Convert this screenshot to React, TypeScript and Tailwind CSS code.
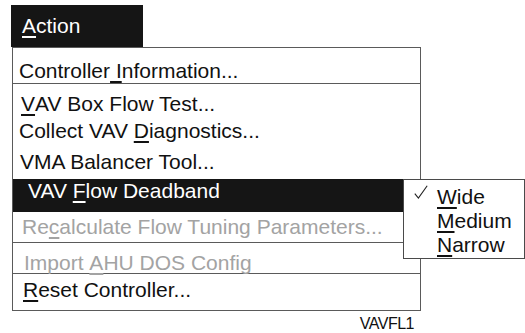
import type { ReactNode } from 'react';

function CheckMark() {
  return (
    <svg viewBox="0 0 14 14" aria-hidden="true" className="block h-[14px] w-[14px]">
      <path d="M0.8 8.6 L4.4 13 L13.2 0.8" fill="none" stroke="#222" strokeWidth="1.1" />
    </svg>
  );
}

function Key({ children }: { children: ReactNode }) {
  return <span className="underline decoration-[1.5px] underline-offset-[3px]">{children}</span>;
}

function Row({
  className,
  children,
}: {
  className: string;
  children: ReactNode;
}) {
  return <div className={`flex items-start whitespace-nowrap leading-none ${className}`}>{children}</div>;
}

export default function App() {
  return (
    <div className="h-[333px] w-[525px] overflow-hidden bg-white pt-[5px] text-[21px] text-[#111] [font-family:'Liberation_Sans',Arial,sans-serif]">
      <div className="ml-[11px] h-[42px] w-[132px] bg-[#151515] pl-[11px] pt-[10px] leading-none text-white">
        <Key>A</Key>ction
      </div>

      <div className="relative ml-[12px] w-[409px] border border-[#5a5a5a]">
        <Row className="h-[36px] border-b border-[#5a5a5a] pl-[6px] pt-[12px]">
          Controller<Key>&nbsp;I</Key>nformation...
        </Row>
        <Row className="h-[32px] pl-[8px] pt-[9px]">
          <Key>V</Key>AV Box Flow Test...
        </Row>
        <Row className="h-[32px] pl-[6px] pt-[4px]">
          Collect VAV&nbsp;<Key>D</Key>iagnostics...
        </Row>
        <Row className="h-[31px] pl-[7px] pt-[3px]">VMA Balancer Tool...</Row>
        <Row className="h-[33px] bg-[#151515] pl-[15px] pt-[1px] text-white">
          VAV&nbsp;<Key>F</Key>low Deadband
        </Row>
        <Row className="h-[31px] border-b border-[#5a5a5a] pl-[9px] pt-[4px] text-[#a3a3a3]">
          Re<Key>c</Key>alculate Flow Tuning Parameters...
        </Row>
        <Row className="h-[31px] border-b border-[#5a5a5a] pl-[11px] pt-[9px] text-[#a3a3a3]">
          Import&nbsp;<Key>A</Key>HU DOS Config
        </Row>
        <Row className="h-[36px] pl-[10px] pt-[5px]">
          <Key>R</Key>eset Controller...
        </Row>

        <div className="absolute left-[390px] top-[131px] h-[80px] w-[122px] border border-[#4a4a4a] bg-white pt-[5px] leading-[24px]">
          <div className="flex">
            <div className="w-[10px]" />
            <div className="w-[23px]">
              <CheckMark />
            </div>
            <span>
              <Key>W</Key>ide
            </span>
          </div>
          <div className="pl-[33px]">
            <Key>M</Key>edium
          </div>
          <div className="pl-[33px]">
            <Key>N</Key>arrow
          </div>
        </div>
      </div>

      <div className="ml-[12px] mt-[5px] flex w-[409px] justify-end pr-[7px] text-[16px] leading-none tracking-[-0.5px]">
        VAVFL1
      </div>
    </div>
  );
}
